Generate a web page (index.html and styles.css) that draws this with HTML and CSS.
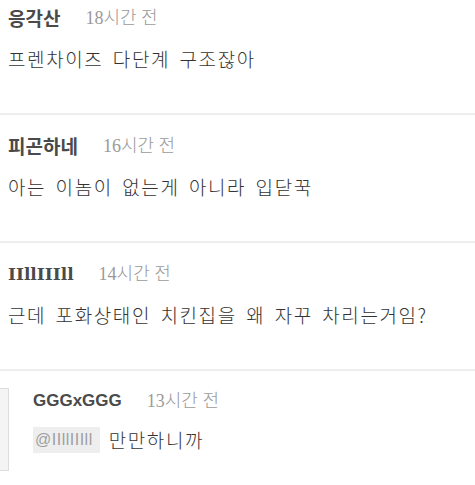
FILE: index.html
```html
<!DOCTYPE html>
<html lang="ko">
<head>
<meta charset="utf-8">
<link rel="stylesheet" href="styles.css">
</head>
<body>
<div class="comments">
  <div class="comment comment--first">
    <div class="meta"><span class="name">응각산</span><span class="time">18시간 전</span></div>
    <p class="text">프렌차이즈 다단계 구조잖아</p>
  </div>
  <div class="comment">
    <div class="meta"><span class="name">피곤하네</span><span class="time">16시간 전</span></div>
    <p class="text">아는 이놈이 없는게 아니라 입닫꾹</p>
  </div>
  <div class="comment">
    <div class="meta"><span class="name name--latin">IIllIIIll</span><span class="time">14시간 전</span></div>
    <p class="text">근데 포화상태인 치킨집을 왜 자꾸 차리는거임?</p>
  </div>
  <div class="reply">
    <div class="reply-mark"></div>
    <div class="reply-body">
      <div class="meta"><span class="name name--sans">GGGxGGG</span><span class="time">13시간 전</span></div>
      <p class="text text--reply"><span class="mention">@IIllIIIll</span> 만만하니까</p>
    </div>
  </div>
</div>
</body>
</html>
```
FILE: styles.css
```css
html, body {
  margin: 0;
  padding: 0;
  background: #fff;
}
body {
  font-family: "Noto Sans CJK KR", sans-serif;
  width: 475px;
  height: 485px;
  overflow: hidden;
}
.comment {
  padding: 21px 8px 42px;
  border-bottom: 2px solid #eeeeee;
}
.comment--first {
  padding-top: 8px;
}
.meta {
  display: flex;
  align-items: center;
  height: 20px;
  gap: 25px;
}
.name {
  font-family: "Noto Sans CJK KR", sans-serif;
  font-weight: 700;
  font-size: 19px;
  line-height: 20px;
  color: #4a4a4a;
}
.name--latin {
  font-family: "DejaVu Serif", "Noto Sans CJK KR", serif;
  font-size: 17px;
}
.name--sans {
  font-family: "Liberation Sans", "Noto Sans CJK KR", sans-serif;
  font-size: 17px;
}
.time {
  font-family: "Liberation Serif", "Noto Sans CJK KR", serif;
  font-size: 18px;
  line-height: 20px;
  color: #9a9a9a;
  font-weight: 300;
}
.text {
  margin: 19px 0 0;
  font-family: "Noto Sans CJK KR", sans-serif;
  font-weight: 300;
  font-size: 19px;
  line-height: 24px;
  color: #333;
  letter-spacing: 1.6px;
  word-spacing: 2.5px;
  white-space: nowrap;
}
.reply {
  display: flex;
  align-items: flex-start;
}
.reply-mark {
  width: 9px;
  height: 83px;
  margin-top: 17px;
  box-sizing: border-box;
  background: #f4f4f4;
  border: 1px solid #dddddd;
  border-left: none;
}
.reply-body {
  padding: 20px 0 0 24px;
}
.text--reply {
  margin-top: 16px;
  line-height: 26px;
  display: flex;
  align-items: center;
  gap: 9px;
  word-spacing: 0;
}
.mention {
  font-family: "Liberation Sans", "Noto Sans CJK KR", sans-serif;
  font-weight: 400;
  font-size: 16px;
  line-height: 26px;
  color: #9e9e9e;
  background: #eeeeee;
  padding: 0 7px 0 2px;
  letter-spacing: 0.5px;
}
```
